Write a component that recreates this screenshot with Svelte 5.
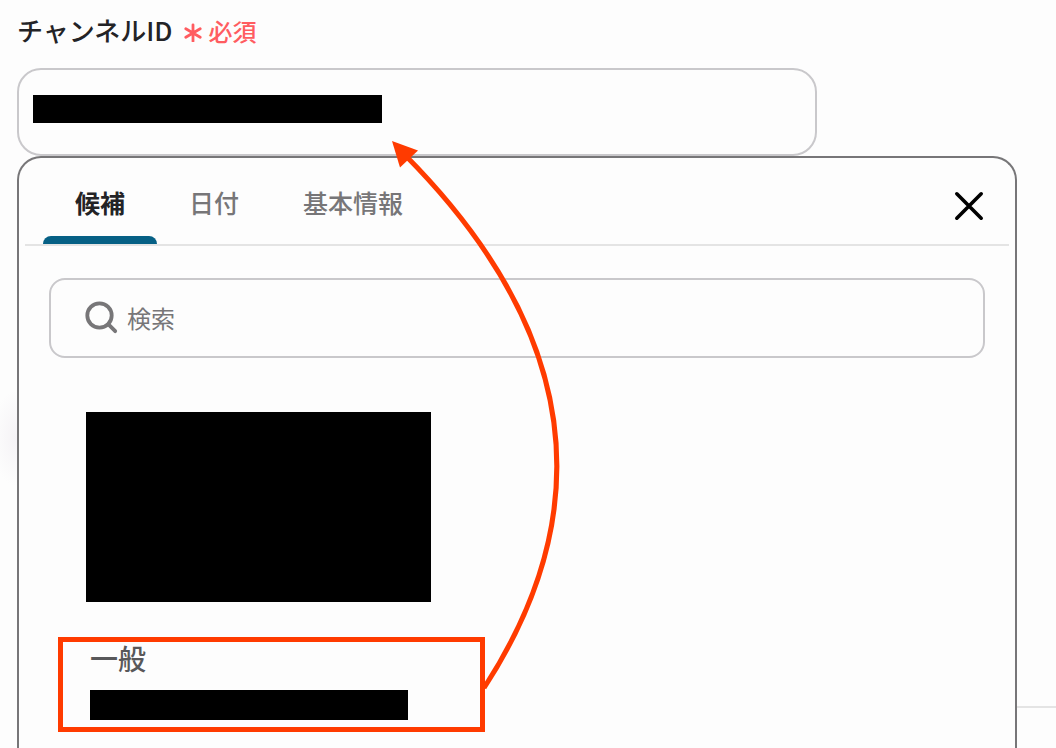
<script lang="ts">
  let {
    label = "チャンネルID",
    tabs = ["候補", "日付", "基本情報"],
    option = "一般",
  }: {
    label?: string;
    tabs?: string[];
    option?: string;
  } = $props();

  let active = $state(0);
  let channel = $state("");
  let query = $state("");
</script>

<main class="page">
  <span class="glow"></span>
  <hr class="page-rule" />

  <div class="field">
    <div class="heading">
      <label class="title" for="channel-id">{label}</label>
      <span class="required">
        <svg width="18" height="24" viewBox="0 0 18 24" aria-hidden="true">
          <path d="M9 6.8v16.4M1.8 10.8l14.4 8.4M16.2 10.8L1.8 19.2" />
        </svg>
        必須
      </span>
    </div>
    <div class="channel">
      <input id="channel-id" type="text" bind:value={channel} />
      <span class="mask"></span>
    </div>
  </div>

  <section class="panel">
    <header class="panel-header">
      <div class="tabs" role="tablist">
        {#each tabs as tab, i}
          <button
            class="tab"
            class:active={active === i}
            type="button"
            role="tab"
            aria-selected={active === i}
            onclick={() => (active = i)}
          >
            {tab}
          </button>
        {/each}
      </div>
      <button class="close" type="button" aria-label="閉じる">
        <svg width="30" height="30" viewBox="0 0 30 30" aria-hidden="true">
          <path d="M2.8 2.8l24.4 24.4M27.2 2.8L2.8 27.2" />
        </svg>
      </button>
    </header>

    <label class="search">
      <svg width="34" height="34" viewBox="0 0 34 34" aria-hidden="true">
        <circle cx="14.5" cy="14.5" r="12.2" />
        <path d="M23.2 23.2l7 7" />
      </svg>
      <input type="text" placeholder="検索" aria-label="検索" bind:value={query} />
    </label>

    <div class="options">
      <div class="block"></div>
      <button class="option" type="button">
        <span>{option}</span>
        <span class="bar"></span>
      </button>
    </div>
  </section>

  <svg class="arrow" width="600" height="748" viewBox="0 0 600 748" aria-hidden="true">
    <path class="line" d="M484 688Q662 414 405 155" />
    <path class="head" d="M392 141l26 9.5-18 17z" />
  </svg>
</main>

<style>
  :global(body) {
    margin: 0;
    background: #fdfdfd;
  }

  .page {
    position: relative;
    display: flex;
    flex-direction: column;
    box-sizing: border-box;
    min-height: 100vh;
    padding: 0 39px 0 17px;
    overflow: hidden;
    font-family: "Noto Sans CJK JP", sans-serif;
    color: #232326;
  }

  button,
  input {
    font-family: inherit;
    color: inherit;
  }

  button {
    border: none;
    background: none;
    cursor: pointer;
  }

  svg {
    flex: none;
    fill: none;
    stroke: currentColor;
    stroke-linecap: round;
  }

  .glow {
    position: absolute;
    top: 390px;
    left: -8px;
    width: 48px;
    height: 96px;
    background: radial-gradient(closest-side, #f5f3f6, #fdfdfd);
  }

  .page-rule {
    position: absolute;
    right: 0;
    bottom: 40px;
    width: 50%;
    height: 2px;
    margin: 0;
    border: none;
    background: #e4e4e4;
  }

  .heading {
    display: flex;
    align-items: center;
    gap: 12px;
    box-sizing: border-box;
    height: 64px;
    padding-bottom: 4px;
    margin-bottom: 4px;
  }

  .title {
    padding-bottom: 2px;
    font-size: 26px;
    font-weight: 500;
  }

  .required {
    display: flex;
    align-items: center;
    gap: 6px;
    font-size: 24px;
    font-weight: 500;
    color: #ff5c60;
  }

  .required svg {
    stroke-width: 2.8;
  }

  .channel {
    position: relative;
    width: 80%;
  }

  .channel input {
    display: block;
    box-sizing: border-box;
    width: 100%;
    height: 88px;
    padding: 0 16px;
    border: 2px solid #c9c8cb;
    border-radius: 24px;
    background: #fdfdfd;
    font-size: 24px;
  }

  .mask {
    position: absolute;
    top: 27px;
    left: 16px;
    width: 349px;
    height: 28px;
    background: #000;
  }

  .panel {
    position: relative;
    flex: 1;
    border: 2px solid #777678;
    border-bottom: none;
    border-radius: 24px 24px 0 0;
    background: #fdfdfd;
  }

  .panel-header {
    display: flex;
    justify-content: space-between;
    margin: 0 6px;
    padding: 0 16px 0 18px;
    border-bottom: 2px solid #e4e4e4;
  }

  .tabs {
    display: flex;
  }

  .tab {
    position: relative;
    height: 86px;
    padding: 2px 32px 0;
    font-size: 25px;
    font-weight: 500;
    color: #777678;
  }

  .tab.active {
    color: #232326;
    font-weight: 700;
  }

  .tab.active::after {
    content: "";
    position: absolute;
    right: 0;
    bottom: 0;
    left: 0;
    height: 8px;
    border-radius: 8px 8px 0 0;
    background: #066085;
  }

  .close {
    display: flex;
    align-items: center;
    justify-content: center;
    width: 48px;
    padding: 10px 0 0;
    color: #000;
  }

  .close svg {
    stroke-width: 3.6;
  }

  .search {
    display: flex;
    align-items: center;
    gap: 8px;
    box-sizing: border-box;
    height: 80px;
    margin: 32px 30px 0;
    padding: 0 34px;
    border: 2px solid #c9c8cb;
    border-radius: 16px;
    color: #777678;
  }

  .search svg {
    stroke-width: 3.8;
  }

  .search input {
    flex: 1;
    min-width: 0;
    padding: 0 0 2px;
    border: none;
    outline: none;
    background: transparent;
    font-size: 24px;
  }

  .search input::placeholder {
    color: #777678;
    opacity: 1;
  }

  .options {
    display: flex;
    flex-direction: column;
    align-items: flex-start;
    padding: 54px 39px 16px;
  }

  .block {
    width: 345px;
    height: 190px;
    margin: 0 28px 35px;
    background: #000;
  }

  .option {
    display: flex;
    flex-direction: column;
    gap: 16px;
    box-sizing: border-box;
    width: 427px;
    height: 95px;
    padding: 0 27px;
    border: 5px solid #ff3b00;
    font-size: 28px;
    font-weight: 500;
    line-height: 32px;
    text-align: left;
    color: #58585a;
  }

  .bar {
    width: 318px;
    height: 30px;
    background: #000;
  }

  .arrow {
    position: absolute;
    top: 0;
    left: 0;
    pointer-events: none;
  }

  .line {
    stroke: #ff3b00;
    stroke-width: 5;
    stroke-linecap: butt;
  }

  .head {
    fill: #ff3b00;
    stroke: none;
  }
</style>
